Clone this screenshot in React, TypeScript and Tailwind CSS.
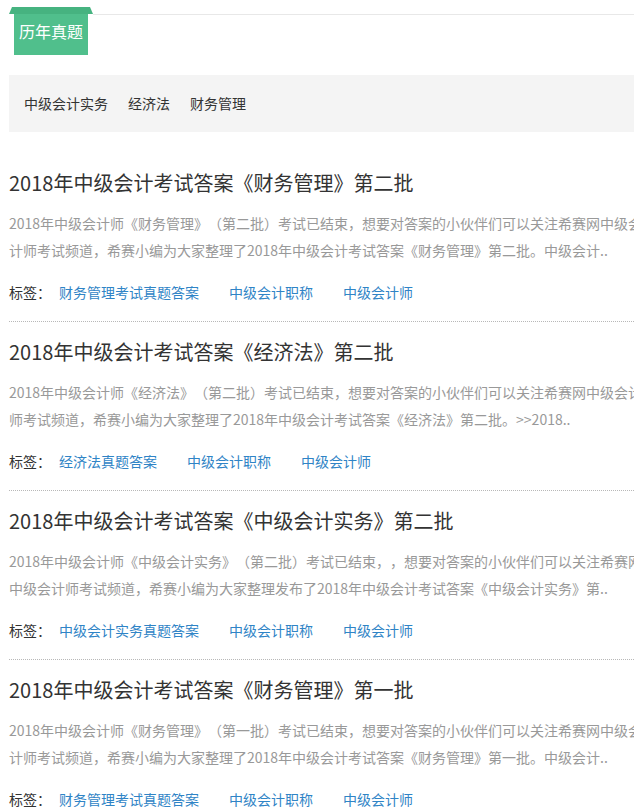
import React from "react";

type Article = {
  title: string;
  desc: string;
  tags: string[];
};

const articles: Article[] = [
  {
    title: "2018年中级会计考试答案《财务管理》第二批",
    desc: "2018年中级会计师《财务管理》（第二批）考试已结束，想要对答案的小伙伴们可以关注希赛网中级会计师考试频道，希赛小编为大家整理了2018年中级会计考试答案《财务管理》第二批。中级会计..",
    tags: ["财务管理考试真题答案", "中级会计职称", "中级会计师"],
  },
  {
    title: "2018年中级会计考试答案《经济法》第二批",
    desc: "2018年中级会计师《经济法》（第二批）考试已结束，想要对答案的小伙伴们可以关注希赛网中级会计师考试频道，希赛小编为大家整理了2018年中级会计考试答案《经济法》第二批。>>2018..",
    tags: ["经济法真题答案", "中级会计职称", "中级会计师"],
  },
  {
    title: "2018年中级会计考试答案《中级会计实务》第二批",
    desc: "2018年中级会计师《中级会计实务》（第二批）考试已结束，，想要对答案的小伙伴们可以关注希赛网中级会计师考试频道，希赛小编为大家整理发布了2018年中级会计考试答案《中级会计实务》第..",
    tags: ["中级会计实务真题答案", "中级会计职称", "中级会计师"],
  },
  {
    title: "2018年中级会计考试答案《财务管理》第一批",
    desc: "2018年中级会计师《财务管理》（第一批）考试已结束，想要对答案的小伙伴们可以关注希赛网中级会计师考试频道，希赛小编为大家整理了2018年中级会计考试答案《财务管理》第一批。中级会计..",
    tags: ["财务管理考试真题答案", "中级会计职称", "中级会计师"],
  },
];

export default function App() {
  return (
    <div
      className="w-full min-h-[812px] overflow-hidden bg-white [text-spacing-trim:space-all]"
      style={{ fontFamily: '"Noto Sans CJK SC", "Noto Sans", sans-serif' }}
    >
      <div className="w-[660px] pl-[9px]">
        {/* header tab */}
        <div className="flex pt-[7px]">
          <div className="w-[84px] shrink-0">
            <div className="h-[7px] bg-[#46b380] [clip-path:polygon(3px_0,81px_0,84px_100%,0_100%)]" />
            <div className="mx-[5px] flex h-[41px] w-[74px] items-start justify-center bg-[#50bf8c] pt-[6px] text-[16px] leading-[22px] text-white">
              历年真题
            </div>
          </div>
          <div className="mt-[7px] h-0 flex-1 border-t border-[#e8e8e8]" />
        </div>

        {/* category bar */}
        <div className="mt-[20px] flex h-[57px] items-center gap-[20px] bg-[#f4f4f4] pl-[15px] text-[14px] text-[#333]">
          <span>中级会计实务</span>
          <span>经济法</span>
          <span>财务管理</span>
        </div>

        {/* articles */}
        <div className="mt-[21px]">
          {articles.map((a, i) => (
            <div
              key={i}
              className="border-b border-dotted border-[#b8b8b8] pt-[15px] pb-[19px]"
            >
              <div className="text-[20px] leading-[30px] text-[#333]">{a.title}</div>
              <div className="mt-[12px] w-[640px] text-[14px] leading-[27px] text-[#999]">
                {a.desc}
              </div>
              <div className="mt-[18px] flex items-center text-[14px] leading-[20px]">
                <span className="mr-[8px] text-[#333]">标签：</span>
                {a.tags.map((t, j) => (
                  <span key={j} className="mr-[30px] text-[#2f84c6]">
                    {t}
                  </span>
                ))}
              </div>
            </div>
          ))}
        </div>
      </div>
    </div>
  );
}
